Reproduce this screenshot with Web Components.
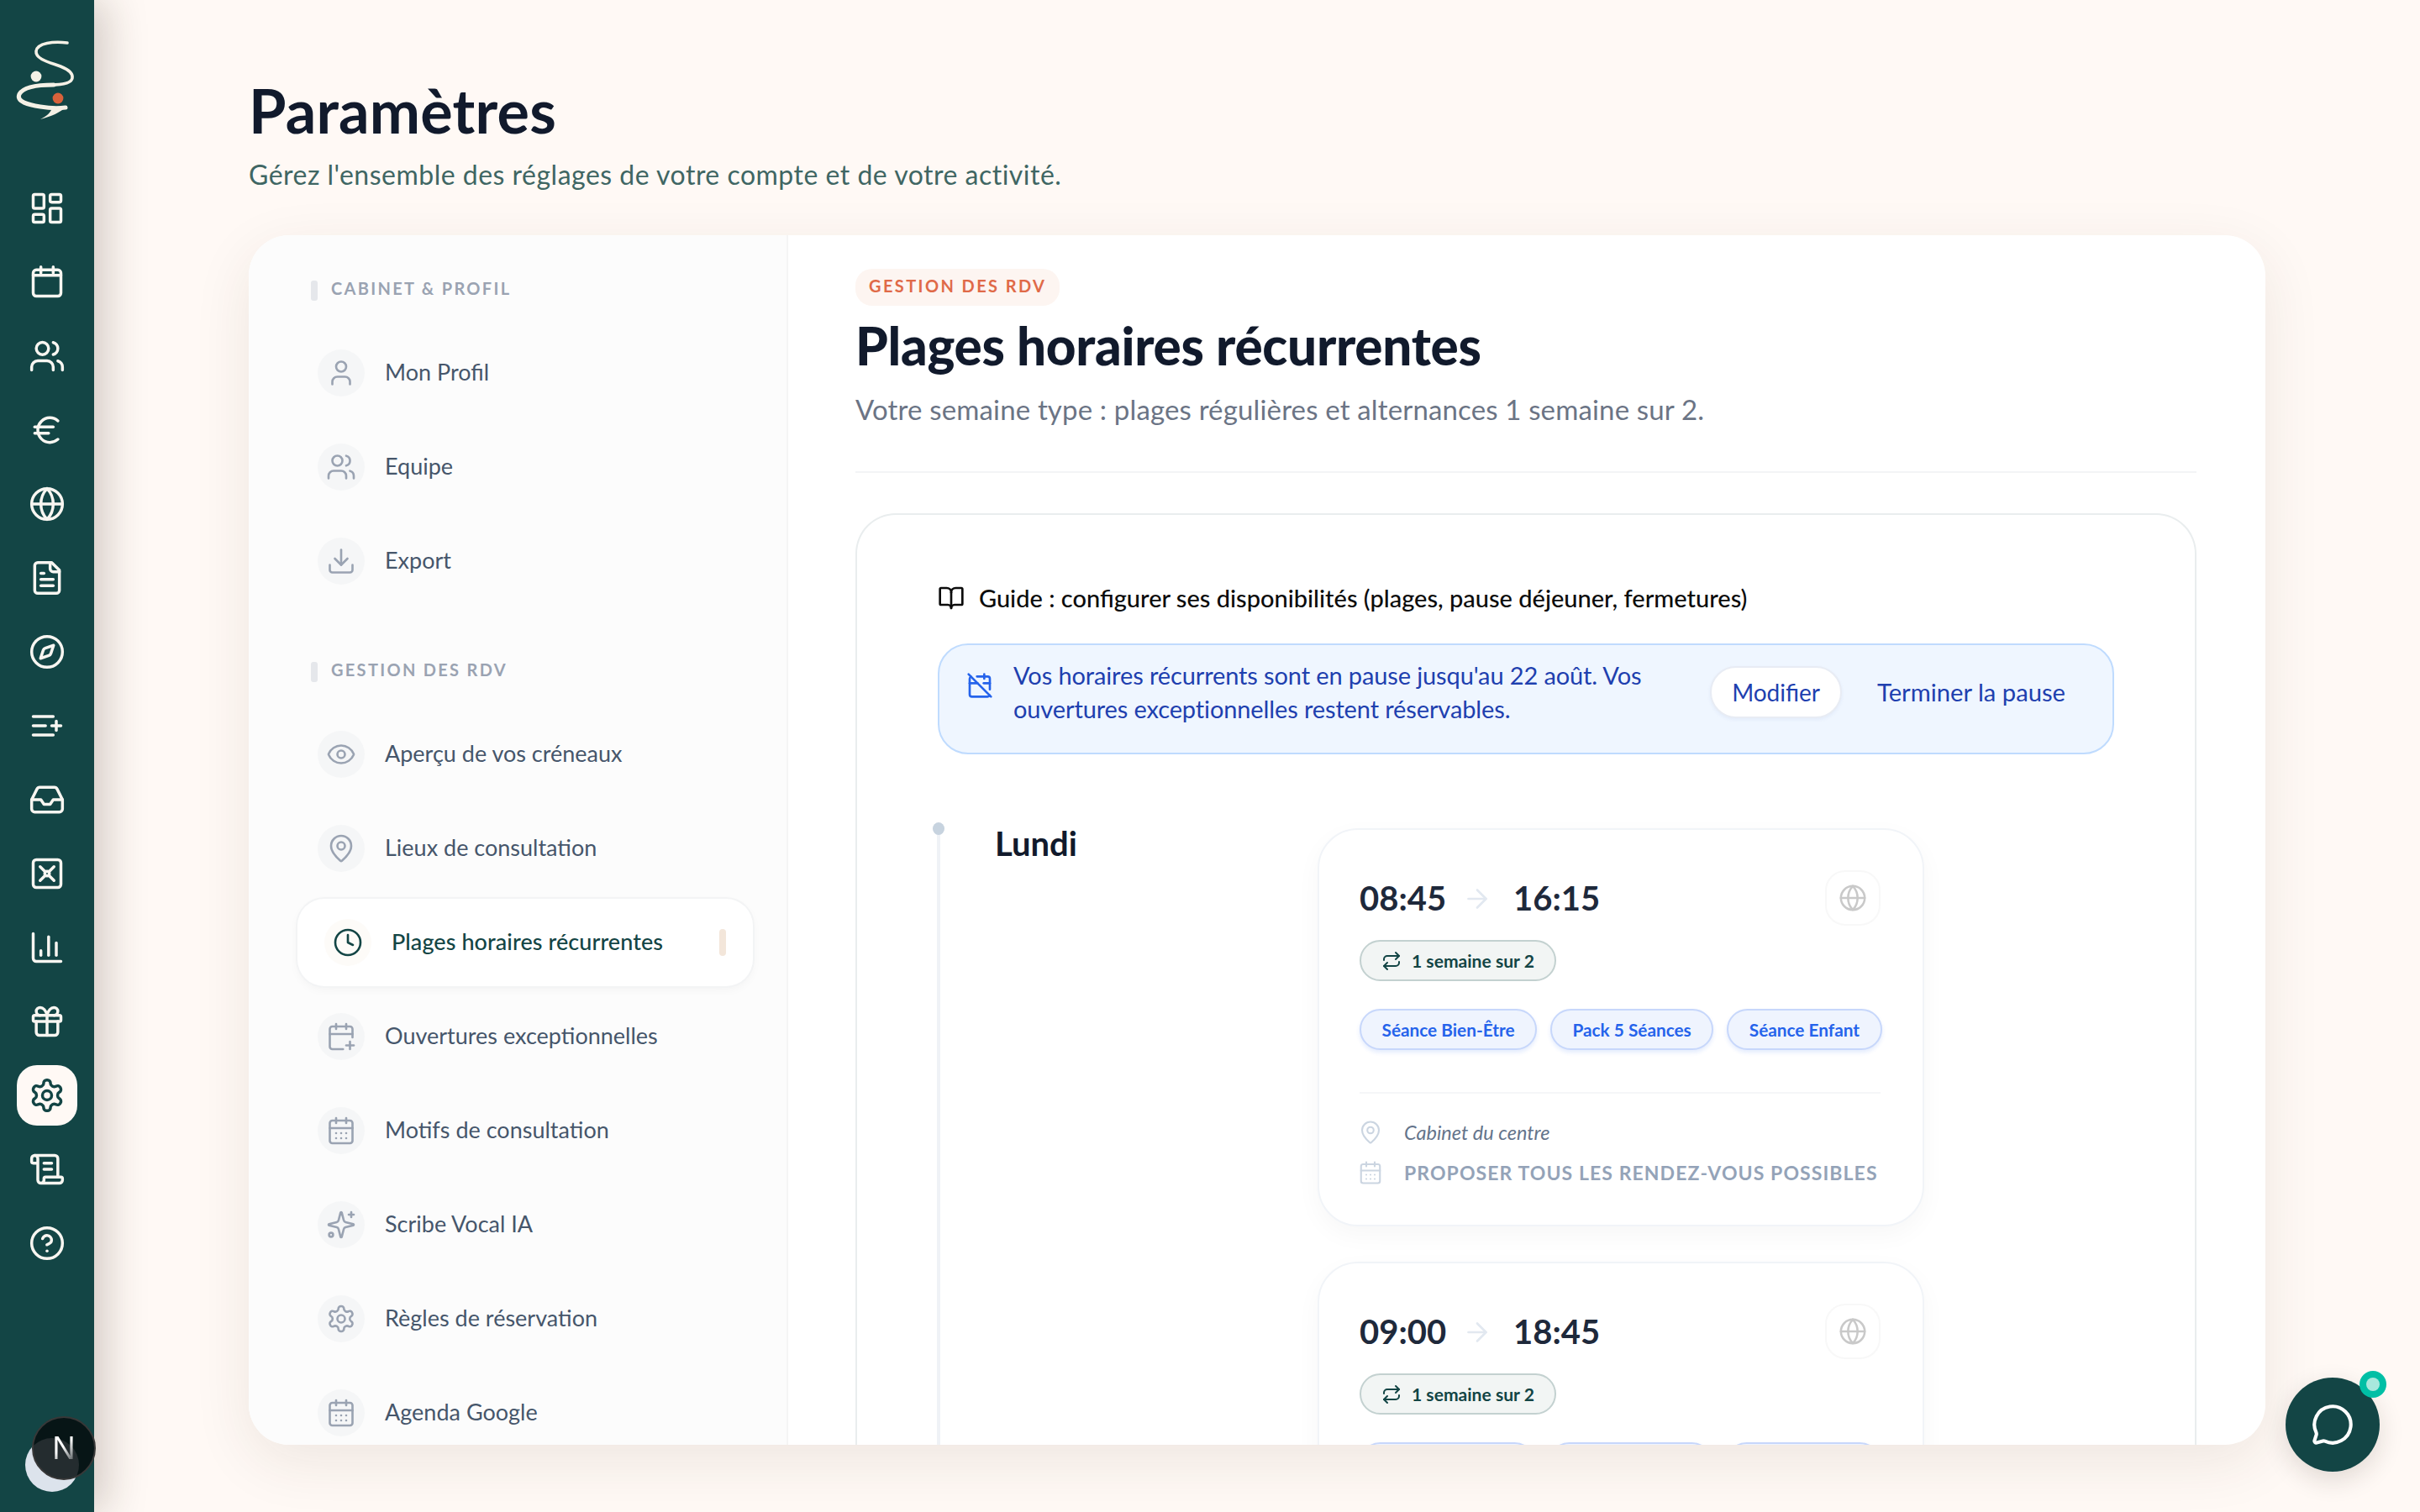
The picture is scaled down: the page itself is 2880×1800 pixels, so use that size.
<!DOCTYPE html>
<html lang="fr">
<head>
<meta charset="utf-8">
<title>Paramètres</title>
<style>
  html, body { margin: 0; height: 100%; }
  body {
    width: 2880px; height: 1800px; overflow: hidden; display: flex;
    background: #fff9f5; color: #111a2c;
    font-family: "Lato", "Noto Sans", sans-serif;
  }
</style>
</head>
<body>
<app-rail>
  <rail-item icon="dashboard"></rail-item>
  <rail-item icon="calendar"></rail-item>
  <rail-item icon="users"></rail-item>
  <rail-item icon="euro"></rail-item>
  <rail-item icon="globe"></rail-item>
  <rail-item icon="file"></rail-item>
  <rail-item icon="compass"></rail-item>
  <rail-item icon="listplus"></rail-item>
  <rail-item icon="inbox"></rail-item>
  <rail-item icon="vault"></rail-item>
  <rail-item icon="chart"></rail-item>
  <rail-item icon="gift"></rail-item>
  <rail-item icon="settings" active></rail-item>
  <rail-item icon="scroll"></rail-item>
  <rail-item icon="help"></rail-item>
</app-rail>

<settings-page heading="Paramètres" sub="Gérez l'ensemble des réglages de votre compte et de votre activité.">
  <settings-nav slot="nav">
    <nav-section label="CABINET &amp; PROFIL">
      <nav-item icon="user">Mon Profil</nav-item>
      <nav-item icon="users">Equipe</nav-item>
      <nav-item icon="download">Export</nav-item>
    </nav-section>
    <nav-section label="GESTION DES RDV">
      <nav-item icon="eye">Aperçu de vos créneaux</nav-item>
      <nav-item icon="pin">Lieux de consultation</nav-item>
      <nav-item icon="clock" active>Plages horaires récurrentes</nav-item>
      <nav-item icon="calplus">Ouvertures exceptionnelles</nav-item>
      <nav-item icon="caldays">Motifs de consultation</nav-item>
      <nav-item icon="sparkle">Scribe Vocal IA</nav-item>
      <nav-item icon="settings">Règles de réservation</nav-item>
      <nav-item icon="caldays">Agenda Google</nav-item>
    </nav-section>
  </settings-nav>
  <schedule-panel>
    <slot-card start="08:45" end="16:15">
      <service-pill>Séance Bien-Être</service-pill>
      <service-pill>Pack 5 Séances</service-pill>
      <service-pill>Séance Enfant</service-pill>
    </slot-card>
    <!-- la carte suivante passe sous le bord du panneau : seul le haut des pastilles est visible -->
    <slot-card start="09:00" end="18:45" clipped>
      <service-pill style="width:210px"></service-pill>
      <service-pill style="width:195px"></service-pill>
      <service-pill style="width:185px"></service-pill>
    </slot-card>
  </schedule-panel>
</settings-page>

<dev-badge></dev-badge>
<chat-fab></chat-fab>

<script>
const ICONS = {
  dashboard: '<rect x="3" y="3" width="7" height="9" rx="1"/><rect x="14" y="3" width="7" height="5" rx="1"/><rect x="14" y="12" width="7" height="9" rx="1"/><rect x="3" y="16" width="7" height="5" rx="1"/>',
  calendar: '<path d="M8 2v4M16 2v4"/><rect x="3" y="4" width="18" height="17" rx="2"/><path d="M3 7.5h18"/>',
  users: '<path d="M16 21v-2a4 4 0 0 0-4-4H6a4 4 0 0 0-4 4v2"/><circle cx="9" cy="7" r="4"/><path d="M22 21v-2a4 4 0 0 0-3-3.87"/><path d="M16 3.13a4 4 0 0 1 0 7.75"/>',
  euro: '<path d="M4 10h12"/><path d="M4 14h9"/><path d="M19 6a7.7 7.7 0 0 0-5.2-2A7.9 7.9 0 0 0 6 12c0 4.4 3.5 8 7.8 8 2 0 3.8-.8 5.2-2"/>',
  globe: '<circle cx="12" cy="12" r="10"/><path d="M12 2a14.5 14.5 0 0 0 0 20 14.5 14.5 0 0 0 0-20"/><path d="M2 12h20"/>',
  file: '<path d="M15 2H6a2 2 0 0 0-2 2v16a2 2 0 0 0 2 2h12a2 2 0 0 0 2-2V7Z"/><path d="M14 2v4a2 2 0 0 0 2 2h4"/><path d="M10 9H8"/><path d="M16 13H8"/><path d="M16 17H8"/>',
  compass: '<circle cx="12" cy="12" r="10"/><path d="m16.24 7.76-1.804 5.411a2 2 0 0 1-1.265 1.265L7.76 16.24l1.804-5.411a2 2 0 0 1 1.265-1.265z"/>',
  listplus: '<path d="M11 12H3"/><path d="M16 6H3"/><path d="M16 18H3"/><path d="M18 9v6"/><path d="M21 12h-6"/>',
  inbox: '<polyline points="22 12 16 12 14 15 10 15 8 12 2 12"/><path d="M5.45 5.11 2 12v6a2 2 0 0 0 2 2h16a2 2 0 0 0 2-2v-6l-3.45-6.89A2 2 0 0 0 16.76 4H7.24a2 2 0 0 0-1.79 1.11z"/>',
  vault: '<rect x="3" y="3" width="18" height="18" rx="2"/><circle cx="12" cy="12" r="1.5"/><path d="m7.5 7.5 3.4 3.4M13.1 13.1l3.4 3.4M16.5 7.5l-3.4 3.4M7.5 16.5l3.4-3.4"/>',
  chart: '<path d="M3 3v16a2 2 0 0 0 2 2h16"/><path d="M18 17V9"/><path d="M13 17V5"/><path d="M8 17v-3"/>',
  gift: '<rect x="3" y="8" width="18" height="4" rx="1"/><path d="M12 8v13"/><path d="M19 12v7a2 2 0 0 1-2 2H7a2 2 0 0 1-2-2v-7"/><path d="M7.5 8a2.5 2.5 0 0 1 0-5A4.8 8 0 0 1 12 8a4.8 8 0 0 1 4.5-5 2.5 2.5 0 0 1 0 5"/>',
  settings: '<path d="M12.22 2h-.44a2 2 0 0 0-2 2v.18a2 2 0 0 1-1 1.73l-.43.25a2 2 0 0 1-2 0l-.15-.08a2 2 0 0 0-2.73.73l-.22.38a2 2 0 0 0 .73 2.73l.15.1a2 2 0 0 1 1 1.72v.51a2 2 0 0 1-1 1.74l-.15.09a2 2 0 0 0-.73 2.73l.22.38a2 2 0 0 0 2.73.73l.15-.08a2 2 0 0 1 2 0l.43.25a2 2 0 0 1 1 1.73V20a2 2 0 0 0 2 2h.44a2 2 0 0 0 2-2v-.18a2 2 0 0 1 1-1.73l.43-.25a2 2 0 0 1 2 0l.15.08a2 2 0 0 0 2.73-.73l.22-.39a2 2 0 0 0-.73-2.73l-.15-.08a2 2 0 0 1-1-1.74v-.5a2 2 0 0 1 1-1.74l.15-.09a2 2 0 0 0 .73-2.73l-.22-.38a2 2 0 0 0-2.73-.73l-.15.08a2 2 0 0 1-2 0l-.43-.25a2 2 0 0 1-1-1.73V4a2 2 0 0 0-2-2z"/><circle cx="12" cy="12" r="3"/>',
  scroll: '<path d="M15 12h-5"/><path d="M15 8h-5"/><path d="M19 17V5a2 2 0 0 0-2-2H4"/><path d="M8 21h12a2 2 0 0 0 2-2v-1a1 1 0 0 0-1-1H11a1 1 0 0 0-1 1v1a2 2 0 1 1-4 0V5a2 2 0 1 0-4 0v2a1 1 0 0 0 1 1h3"/>',
  help: '<circle cx="12" cy="12" r="10"/><path d="M9.09 9a3 3 0 0 1 5.83 1c0 2-3 3-3 3"/><path d="M12 17h.01"/>',
  chat: '<path d="M2.992 16.342a2 2 0 0 1 .094 1.167l-1.065 3.29a1 1 0 0 0 1.236 1.168l3.413-.998a2 2 0 0 1 1.099.092 10 10 0 1 0-4.777-4.719"/>',
  user: '<path d="M19 21v-2a4 4 0 0 0-4-4H9a4 4 0 0 0-4 4v2"/><circle cx="12" cy="7" r="4"/>',
  download: '<path d="M12 15V3"/><path d="M21 15v4a2 2 0 0 1-2 2H5a2 2 0 0 1-2-2v-4"/><path d="m7 10 5 5 5-5"/>',
  eye: '<path d="M2.062 12.348a1 1 0 0 1 0-.696 10.75 10.75 0 0 1 19.876 0 1 1 0 0 1 0 .696 10.75 10.75 0 0 1-19.876 0"/><circle cx="12" cy="12" r="3"/>',
  pin: '<path d="M20 10c0 4.993-5.539 10.193-7.399 11.799a1 1 0 0 1-1.202 0C9.539 20.193 4 14.993 4 10a8 8 0 0 1 16 0"/><circle cx="12" cy="10" r="3"/>',
  clock: '<circle cx="12" cy="12" r="10"/><polyline points="12 6 12 12 16 14"/>',
  calplus: '<path d="M16 19h6"/><path d="M16 2v4"/><path d="M19 16v6"/><path d="M21 12.598V6a2 2 0 0 0-2-2H5a2 2 0 0 0-2 2v14a2 2 0 0 0 2 2h8.5"/><path d="M3 10h18"/><path d="M8 2v4"/>',
  caldays: '<path d="M8 2v4"/><path d="M16 2v4"/><rect x="3" y="4" width="18" height="18" rx="2"/><path d="M3 10h18"/><path d="M8 14h.01M12 14h.01M16 14h.01M8 18h.01M12 18h.01M16 18h.01"/>',
  sparkle: '<path d="M9.937 15.5A2 2 0 0 0 8.5 14.063l-6.135-1.582a.5.5 0 0 1 0-.962L8.5 9.936A2 2 0 0 0 9.937 8.5l1.582-6.135a.5.5 0 0 1 .963 0L14.063 8.5A2 2 0 0 0 15.5 9.937l6.135 1.581a.5.5 0 0 1 0 .964L15.5 14.063a2 2 0 0 0-1.437 1.437l-1.582 6.135a.5.5 0 0 1-.963 0z"/><path d="M20 2v4"/><path d="M22 4h-4"/><circle cx="4" cy="20" r="1.6"/>',
  book: '<path d="M12 7v14"/><path d="M3 18a1 1 0 0 1-1-1V4a1 1 0 0 1 1-1h5a4 4 0 0 1 4 4 4 4 0 0 1 4-4h5a1 1 0 0 1 1 1v13a1 1 0 0 1-1 1h-6a3 3 0 0 0-3 3 3 3 0 0 0-3-3z"/>',
  caloff: '<path d="M4.2 4.2A2 2 0 0 0 3 6v14a2 2 0 0 0 2 2h14a2 2 0 0 0 1.82-1.18"/><path d="M21 15.5V6a2 2 0 0 0-2-2H9.5"/><path d="M16 2v4"/><path d="M3 10h7"/><path d="M21 10h-5.5"/><path d="m2 2 20 20"/>',
  repeat: '<path d="m17 2 4 4-4 4"/><path d="M3 11v-1a4 4 0 0 1 4-4h14"/><path d="m7 22-4-4 4-4"/><path d="M21 13v1a4 4 0 0 1-4 4H3"/>',
  arrow: '<path d="M5 12h14"/><path d="m12 5 7 7-7 7"/>'
};

// petite base pour eviter de repeter attachShadow partout
class Base extends HTMLElement {
  render(html) {
    if (!this.shadowRoot) this.attachShadow({ mode: 'open' });
    this.shadowRoot.innerHTML = html;
  }
}

class UiIcon extends Base {
  connectedCallback() {
    const size = this.getAttribute('size') || 24;
    const sw = this.getAttribute('stroke') || 2;
    this.render(`
      <style>:host { display: inline-flex; flex: none; } svg { display: block; }</style>
      <svg width="${size}" height="${size}" viewBox="0 0 24 24" fill="none" stroke="currentColor"
           stroke-width="${sw}" stroke-linecap="round" stroke-linejoin="round">${ICONS[this.getAttribute('name')] || ''}</svg>`);
  }
}
customElements.define('ui-icon', UiIcon);

class AppRail extends Base {
  connectedCallback() {
    this.render(`
      <style>
        :host {
          display: flex; flex-direction: column; align-items: center; flex: none;
          width: 112px; height: 1800px; box-sizing: border-box; padding-top: 49px;
          background: #134545; position: relative; z-index: 2;
          box-shadow: 14px 0 50px rgba(50, 35, 25, .22);
        }
        .logo { display: block; margin-bottom: 69px; overflow: visible; }
        .items { display: flex; flex-direction: column; gap: 16px; }
      </style>
      <svg class="logo" width="72" height="94" viewBox="0 0 72 94" fill="none" stroke-linecap="round">
        <path d="M60 2C44 0 24 2 23 12 22 22 42 26 52 30 62 34 67 38 66 44 65 51 52 52 40 52" stroke="#f5f1e6" stroke-width="3.6"/>
        <path d="M44 52C28 52 8 54 3 63-1 72 14 76 28 78 40 80 50 80 58 79" stroke="#f5f1e6" stroke-width="5"/>
        <path d="M60 77C52 85 40 90 28 93 36 89 40 85 42 80z" fill="#f5f1e6"/>
        <circle cx="23" cy="42" r="6.4" fill="#f5f1e6"/>
        <circle cx="49" cy="68" r="6.4" fill="#d9623b"/>
      </svg>
      <div class="items"><slot></slot></div>`);
  }
}
customElements.define('app-rail', AppRail);

class RailItem extends Base {
  connectedCallback() {
    this.render(`
      <style>
        :host {
          display: flex; align-items: center; justify-content: center;
          width: 72px; height: 72px; border-radius: 24px; color: #f8f6f1;
        }
        :host([active]) { background: #fff9f5; color: #134545; }
      </style>
      <ui-icon name="${this.getAttribute('icon')}" size="44" stroke="1.9"></ui-icon>`);
  }
}
customElements.define('rail-item', RailItem);

class SettingsPage extends Base {
  connectedCallback() {
    this.render(`
      <style>
        :host { display: block; flex: 1; min-width: 0; padding: 0 184px 80px; height: 1800px; box-sizing: border-box; }
        header { height: 280px; box-sizing: border-box; padding-top: 86px; }
        h1 { margin: 0; font-size: 72px; line-height: 90px; font-weight: 700; color: #111a2c; letter-spacing: .2px; }
        p { margin: 12px 0 0; font-size: 32px; line-height: 40px; letter-spacing: .49px; color: #3f6663; }
        .card {
          display: flex; height: 1440px; background: #fff; border-radius: 48px; overflow: hidden;
          box-shadow: 0 20px 70px rgba(70, 45, 25, .09);
        }
      </style>
      <header>
        <h1>${this.getAttribute('heading')}</h1>
        <p>${this.getAttribute('sub')}</p>
      </header>
      <div class="card"><slot name="nav"></slot><slot></slot></div>`);
  }
}
customElements.define('settings-page', SettingsPage);

class SettingsNav extends Base {
  connectedCallback() {
    this.render(`
      <style>
        :host {
          display: block; flex: none; width: 642px; box-sizing: border-box; height: 100%;
          padding: 54px 40px 0 58px; background: #fcfcfc; border-right: 2px solid #f5f5f5; overflow: hidden;
        }
      </style>
      <slot></slot>`);
  }
}
customElements.define('settings-nav', SettingsNav);

class NavSection extends Base {
  connectedCallback() {
    this.render(`
      <style>
        :host { display: block; margin-bottom: 68px; }
        .label {
          display: flex; align-items: center; gap: 16px; height: 24px; padding-left: 16px; margin-bottom: 34px;
          font-size: 20px; font-weight: 700; letter-spacing: 2.3px; color: #9aa3b2;
        }
        .label span { margin-bottom: 6px; }
        .label i { width: 8px; height: 24px; border-radius: 3px; background: #e5e7eb; }
        .items { display: flex; flex-direction: column; gap: 8px; }
      </style>
      <div class="label"><i></i><span>${this.getAttribute('label')}</span></div>
      <div class="items"><slot></slot></div>`);
  }
}
customElements.define('nav-section', NavSection);

class NavItem extends Base {
  connectedCallback() {
    this.render(`
      <style>
        :host {
          display: flex; align-items: center; gap: 24px; height: 104px; box-sizing: border-box;
          padding: 0 32px 0 24px; font-size: 27px; color: #46566b; border-radius: 32px;
        }
        :host([active]) {
          background: #fff; color: #134545; padding-left: 32px; font-weight: 500;
          box-shadow: 0 0 0 2px #f3f4f5, 0 4px 12px rgba(0, 0, 0, .04);
        }
        .ic {
          width: 56px; height: 56px; flex: none; border-radius: 50%; background: #f5f6f7; color: #9aa3b2;
          display: flex; align-items: center; justify-content: center;
        }
        :host([active]) .ic { background: #fdfbf8; color: #134545; }
        span { flex: 1; white-space: nowrap; padding-bottom: 3px; }
        :host([active]) span { letter-spacing: .07px; }
        i { display: none; width: 8px; height: 32px; border-radius: 4px; background: #f3e6da; }
        :host([active]) i { display: block; }
      </style>
      <div class="ic"><ui-icon name="${this.getAttribute('icon')}" size="36" stroke="1.75"></ui-icon></div>
      <span><slot></slot></span><i></i>`);
  }
}
customElements.define('nav-item', NavItem);

class SchedulePanel extends Base {
  connectedCallback() {
    this.render(`
      <style>
        :host { display: block; flex: 1; min-width: 0; box-sizing: border-box; padding: 40px 82px 0 80px; overflow: hidden; }
        .tag {
          display: inline-block; height: 44px; line-height: 41px; padding: 0 16px; border-radius: 20px;
          background: #fdf5f1; color: #e06a48; font-size: 20px; font-weight: 700; letter-spacing: 2.4px; vertical-align: top;
        }
        h2 { margin: 9px 0 0; font-size: 62px; line-height: 76px; font-weight: 900; color: #111a2c; letter-spacing: -.3px; }
        .sub { margin: 16px 0 0; font-size: 33px; line-height: 44px; letter-spacing: .15px; color: #6b7485; }
        hr { margin: 52px 0 0; border: 0; height: 2px; background: #f3f4f6; }
        .box {
          margin-top: 48px; border: 2px solid #e9edee; border-bottom: 0; border-radius: 48px 48px 0 0;
          padding: 78px 96px 0; box-sizing: border-box; height: 1200px;
        }
        .guide { display: flex; align-items: center; gap: 17px; height: 40px; font-size: 29px; font-weight: 500; color: #0c0c0c; }
        .guide ui-icon { margin-top: 2px; }
        .banner {
          display: flex; align-items: center; box-sizing: border-box; height: 132px; margin-top: 35px;
          padding: 0 56px 17px 32px; border: 2px solid #bfdbfe; border-radius: 36px; background: #eff6ff; color: #1e40af;
        }
        .banner ui-icon { align-self: flex-start; margin-top: 32px; color: #2563eb; }
        .msg { flex: 1; margin-left: 24px; font-size: 29px; line-height: 40px; letter-spacing: -.12px; }
        .btn { font-size: 29.2px; }
        .pill {
          height: 62px; line-height: 58px; font-size: 28px; box-sizing: border-box; padding: 0 24px; margin-right: 42px; background: #fff;
          border: 2px solid #e8ecf4; border-radius: 31px; box-shadow: 0 2px 4px rgba(30, 64, 175, .06);
        }
        .week { position: relative; margin-top: 79px; display: flex; padding-top: 9px; }
        .week::before { content: ""; position: absolute; left: -1px; top: 10px; bottom: 0; width: 4px; background: #eff2f6; }
        .week::after { content: ""; position: absolute; left: -6px; top: 2px; width: 14px; height: 15px; border-radius: 50%; background: #c7d3df; }
        .day { width: 452px; flex: none; box-sizing: border-box; padding-left: 68px; margin-top: -2px; font-size: 40px; line-height: 40px; font-weight: 700; color: #111a2c; }
        .slots { width: 722px; display: flex; flex-direction: column; gap: 42px; }
      </style>
      <span class="tag">GESTION DES RDV</span>
      <h2>Plages horaires récurrentes</h2>
      <div class="sub">Votre semaine type : plages régulières et alternances 1 semaine sur 2.</div>
      <hr>
      <div class="box">
        <div class="guide"><ui-icon name="book" size="32" stroke="2"></ui-icon><span>Guide : configurer ses disponibilités (plages, pause déjeuner, fermetures)</span></div>
        <div class="banner">
          <ui-icon name="caloff" size="32" stroke="2"></ui-icon>
          <div class="msg">Vos horaires récurrents sont en pause jusqu'au 22 août. Vos<br>ouvertures exceptionnelles restent réservables.</div>
          <div class="pill">Modifier</div>
          <div class="btn">Terminer la pause</div>
        </div>
        <div class="week">
          <div class="day">Lundi</div>
          <div class="slots"><slot></slot></div>
        </div>
      </div>`);
  }
}
customElements.define('schedule-panel', SchedulePanel);

class SlotCard extends Base {
  connectedCallback() {
    const meta = this.hasAttribute('clipped') ? '' : `
      <hr>
      <div class="meta place"><ui-icon name="pin" size="30" stroke="1.7"></ui-icon><span>Cabinet du centre</span></div>
      <div class="meta rule"><ui-icon name="caldays" size="30" stroke="1.7"></ui-icon><span>PROPOSER TOUS LES RENDEZ-VOUS POSSIBLES</span></div>`;
    this.render(`
      <style>
        :host {
          display: block; box-sizing: border-box; height: 474px; padding: 48px 50px 0 48px; background: #fff;
          border: 2px solid #f1f4f8; border-radius: 48px; box-shadow: 0 10px 30px rgba(15, 23, 42, .035);
        }
        .head { display: flex; align-items: center; height: 66px; font-size: 40px; font-weight: 700; color: #1e293b; }
        .arrow { margin: 2px 25px 0 19px; color: #e2e8f0; }
        .net {
          margin-left: auto; width: 66px; height: 66px; box-sizing: border-box; border: 2px solid #f8f8f8; border-radius: 24px;
          display: flex; align-items: center; justify-content: center; color: #c9c9c9;
        }
        .freq {
          display: inline-flex; align-items: center; gap: 12px; height: 49px; box-sizing: border-box; margin-top: 17px; padding: 0 24px;
          background: #f2f5f4; border: 2px solid #c3d1d0; border-radius: 25px; color: #134545; font-size: 21.1px; font-weight: 700; vertical-align: top;
        }
        .services { display: flex; gap: 16px; margin-top: 33px; height: 49px; }
        hr { margin: 50px 0 0; border: 0; height: 2px; background: #f5f6f8; }
        .meta { display: flex; align-items: center; height: 30px; gap: 25px; margin-left: -2px; white-space: nowrap; }
        .meta ui-icon { color: #cbd5e1; }
        .place { margin-top: 31px; font-size: 23.5px; font-style: italic; color: #64748b; }
        .rule { margin-top: 18px; font-size: 23px; font-weight: 700; letter-spacing: 1.08px; color: #94a3b8; }
      </style>
      <div class="head">
        <span>${this.getAttribute('start')}</span>
        <ui-icon class="arrow" name="arrow" size="36" stroke="1.8"></ui-icon>
        <span>${this.getAttribute('end')}</span>
        <div class="net"><ui-icon name="globe" size="34" stroke="1.8"></ui-icon></div>
      </div>
      <div class="freq"><ui-icon name="repeat" size="24" stroke="2"></ui-icon>1 semaine sur 2</div>
      <div class="services"><slot></slot></div>
      ${meta}`);
  }
}
customElements.define('slot-card', SlotCard);

class ServicePill extends Base {
  connectedCallback() {
    this.render(`
      <style>
        :host {
          display: flex; align-items: center; height: 49px; box-sizing: border-box; padding: 0 24.5px;
          background: #eff4fe; border: 2px solid #c7d7fb; border-radius: 25px; color: #2563eb;
          font-size: 20.8px; font-weight: 700; white-space: nowrap; box-shadow: 0 3px 5px rgba(37, 99, 235, .12);
        }
      </style><slot></slot>`);
  }
}
customElements.define('service-pill', ServicePill);

class DevBadge extends Base {
  connectedCallback() {
    this.render(`
      <style>
        :host { position: fixed; left: 30px; top: 1712px; width: 64px; height: 64px; z-index: 3; }
        .avatar { width: 64px; height: 64px; border-radius: 50%; background: #dce3ec; }
        .n {
          position: absolute; left: 8px; top: -26px; width: 76px; height: 76px; box-sizing: border-box; border-radius: 50%;
          background: rgba(6, 14, 15, .86); border: 2px solid #383838;
          display: flex; align-items: center; justify-content: center; font: 400 38px "Liberation Sans", sans-serif;
        }
        .n span {
          color: transparent; background: linear-gradient(140deg, #fff 45%, rgba(255, 255, 255, .25) 85%);
          -webkit-background-clip: text; background-clip: text;
        }
      </style>
      <div class="avatar"></div><div class="n"><span>N</span></div>`);
  }
}
customElements.define('dev-badge', DevBadge);

class ChatFab extends Base {
  connectedCallback() {
    this.render(`
      <style>
        :host {
          position: fixed; left: 2720px; top: 1640px; width: 112px; height: 112px; border-radius: 50%; z-index: 3;
          background: #134545; color: #fff; display: flex; align-items: center; justify-content: center;
          box-shadow: 0 10px 30px rgba(40, 30, 20, .14);
        }
        .dot {
          position: absolute; left: 88px; top: -8px; width: 32px; height: 32px; border-radius: 50%;
          background: #00bfa5; display: flex; align-items: center; justify-content: center;
        }
        .dot i { width: 16px; height: 16px; border-radius: 50%; background: #a8e8dd; }
      </style>
      <ui-icon name="chat" size="52" stroke="1.9"></ui-icon>
      <div class="dot"><i></i></div>`);
  }
}
customElements.define('chat-fab', ChatFab);
</script>
</body>
</html>
